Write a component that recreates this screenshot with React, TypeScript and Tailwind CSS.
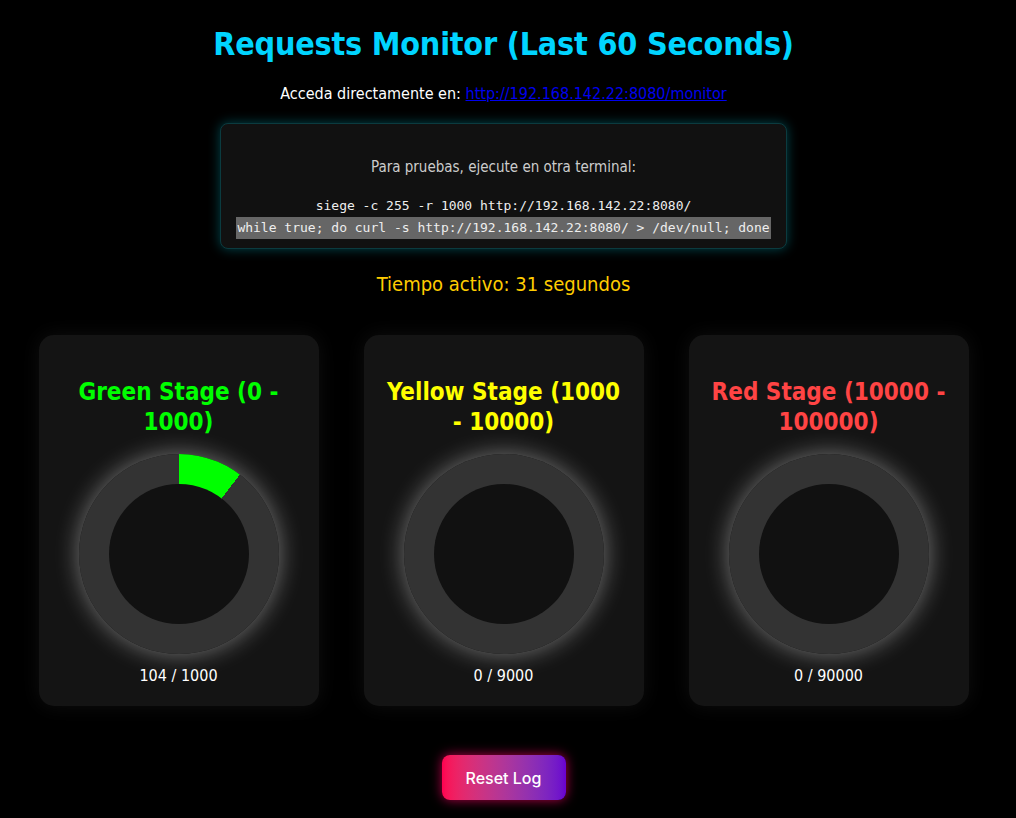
import React from "react";

const F = { fontFamily: '"DejaVu Sans Condensed", "DejaVu Sans", sans-serif' };

type Stage = {
  title: [string, string];
  color: string;
  fill: string;
  value: number;
  max: number;
};

const stages: Stage[] = [
  { title: ["Green Stage (0 -", "1000)"], color: "text-[#00ff00]", fill: "#00ff00", value: 104, max: 1000 },
  { title: ["Yellow Stage (1000", "- 10000)"], color: "text-[#ffff00]", fill: "#ffff00", value: 0, max: 9000 },
  { title: ["Red Stage (10000 -", "100000)"], color: "text-[#ff4444]", fill: "#ff4444", value: 0, max: 90000 },
];

function Card({ s }: { s: Stage }) {
  const pct = (s.value / s.max) * 100;
  return (
    <div className="w-[280px] h-[371px] rounded-[15px] bg-[#141414] shadow-[0_0_20px_rgba(255,255,255,0.06)] flex flex-col items-center pt-[42px]">
      <h2 className={`text-[24px] font-bold leading-[30px] text-center ${s.color}`}>
        {s.title[0]}
        <br />
        {s.title[1]}
      </h2>
      <div
        className="mt-[17px] w-[200px] h-[200px] rounded-full flex items-center justify-center shadow-[0_0_24px_rgba(255,255,255,0.42)]"
        style={{ background: `conic-gradient(${s.fill} 0 ${pct}%, #333333 ${pct}% 100%)` }}
      >
        <div className="w-[140px] h-[140px] rounded-full bg-[#111111]" />
      </div>
      <div className="mt-[12px] text-[16px] leading-[20px] text-white">
        {s.value} / {s.max}
      </div>
    </div>
  );
}

export default function App() {
  return (
    <div className="min-h-[818px] bg-black text-white flex flex-col items-center pr-[9px]" style={F}>
      <h1 className="mt-[24px] text-[32px] leading-[40px] font-bold text-[#00d4ff] tracking-[-0.2px]">
        Requests Monitor (Last 60 Seconds)
      </h1>
      <p className="mt-[20px] text-[16px] leading-[20px] text-white">
        Acceda directamente en:{" "}
        <a href="#" className="text-[#0000ee] underline">
          http://192.168.142.22:8080/monitor
        </a>
      </p>
      <div className="mt-[19px] rounded-[8px] border border-[#0b3b3f] bg-[#111111] px-[15px] pt-[33px] pb-[9px] shadow-[0_0_12px_rgba(0,200,220,0.35)] flex flex-col items-center">
        <p className="text-[15px] leading-[20px] text-[#cccccc]">Para pruebas, ejecute en otra terminal:</p>
        <div
          className="mt-[18px] text-[13px] leading-[22px] text-[#eeeeee] flex flex-col items-center"
          style={{ fontFamily: '"DejaVu Sans Mono", monospace' }}
        >
          <span>siege -c 255 -r 1000 http://192.168.142.22:8080/</span>
          <span className="bg-[#666666] px-[1px]">while true; do curl -s http://192.168.142.22:8080/ &gt; /dev/null; done</span>
        </div>
      </div>
      <p className="mt-[23px] text-[20px] leading-[24px] text-[#ffcc00]">Tiempo activo: 31 segundos</p>
      <div className="mt-[39px] flex gap-[45px]">
        {stages.map((s) => (
          <Card key={s.title[0]} s={s} />
        ))}
      </div>
      <button
        className="mt-[49px] w-[124px] h-[45px] rounded-[8px] text-white text-[16px] font-medium bg-gradient-to-r from-[#ff0050] to-[#6a00d0] shadow-[0_0_12px_rgba(255,0,102,0.7)]"
        style={{ fontFamily: 'Inter, "Liberation Sans", sans-serif' }}
      >
        Reset Log
      </button>
    </div>
  );
}
